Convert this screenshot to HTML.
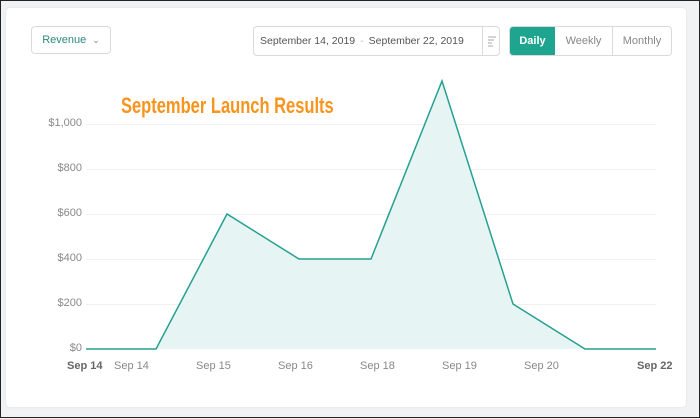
<!DOCTYPE html>
<html><head><style>
*{margin:0;padding:0;box-sizing:border-box}
body{width:700px;height:418px;background:#f1f2f4;border:1px solid #222;position:relative;overflow:hidden;font-family:"Liberation Sans",sans-serif}
.card{position:absolute;left:5px;top:7px;width:680px;height:399px;background:#fff;border-radius:4px;box-shadow:0 0 2px #ddd}
.btn{position:absolute;border:1px solid #d8dadd;border-radius:4px;font-size:11px;color:#555;display:flex;align-items:center}
.title{position:absolute;left:120px;top:92px;font:bold 22px "Liberation Sans Narrow","Liberation Sans",sans-serif;color:#f7941d;transform:scaleX(.75);transform-origin:left;white-space:nowrap}
.yl{position:absolute;right:617px;font-size:11px;color:#888;text-align:right}
.xl{position:absolute;top:359px;font-size:11px;color:#888}
</style></head><body>
<div class="card"></div>
<div class="btn" style="left:30px;top:25px;width:80px;height:28px;justify-content:center;color:#2a8a7d">Revenue <span style="font-size:9px;margin-left:6px;color:#888">&#8964;</span></div>
<div class="btn" style="left:252px;top:25px;width:247px;height:30px;padding-left:6px;font-size:10.5px">September 14, 2019 <span style="color:#bbb;margin:0 5px">-</span> September 22, 2019
<div style="position:absolute;left:228px;top:0;bottom:0;border-left:1px solid #d8dadd;width:18px"><svg width="18" height="28" viewBox="0 0 18 28"><path d="M5 10h8M5 13h6M5 16h4M5 19h5" stroke="#aaa" stroke-width="1"/></svg></div></div>
<div class="btn" style="left:508px;top:25px;width:163px;height:30px;overflow:hidden">
<div style="width:45px;height:100%;background:#1fa58f;color:#fff;font-weight:bold;display:flex;align-items:center;justify-content:center">Daily</div>
<div style="width:58px;height:100%;border-right:1px solid #d8dadd;color:#888;display:flex;align-items:center;justify-content:center">Weekly</div>
<div style="flex:1;color:#888;display:flex;align-items:center;justify-content:center">Monthly</div></div>
<svg style="position:absolute;left:0;top:0" width="700" height="418">
<g stroke="#f0f0f0" stroke-width="1">
<line x1="85" x2="655" y1="123.5" y2="123.5"/><line x1="85" x2="655" y1="168.5" y2="168.5"/><line x1="85" x2="655" y1="213.5" y2="213.5"/><line x1="85" x2="655" y1="258.5" y2="258.5"/><line x1="85" x2="655" y1="303.5" y2="303.5"/></g>
<polygon points="85,348 155,348 226,213 298,258 370,258 441,80 512,303 584,348 655,348" fill="#e6f5f3"/>
<polyline points="85,348 155,348 226,213 298,258 370,258 441,80 512,303 584,348 655,348" fill="none" stroke="#26a091" stroke-width="1.5"/>
</svg>
<div class="title">September Launch Results</div>
<div class="yl" style="top:116px">$1,000</div>
<div class="yl" style="top:161px">$800</div>
<div class="yl" style="top:206px">$600</div>
<div class="yl" style="top:251px">$400</div>
<div class="yl" style="top:296px">$200</div>
<div class="yl" style="top:341px">$0</div>
<div class="xl" style="left:66px;font-weight:bold;color:#666">Sep 14</div>
<div class="xl" style="left:113px">Sep 14</div>
<div class="xl" style="left:195px">Sep 15</div>
<div class="xl" style="left:277px">Sep 16</div>
<div class="xl" style="left:359px">Sep 18</div>
<div class="xl" style="left:441px">Sep 19</div>
<div class="xl" style="left:523px">Sep 20</div>
<div class="xl" style="left:636px;font-weight:bold;color:#666">Sep 22</div>
</body></html>
